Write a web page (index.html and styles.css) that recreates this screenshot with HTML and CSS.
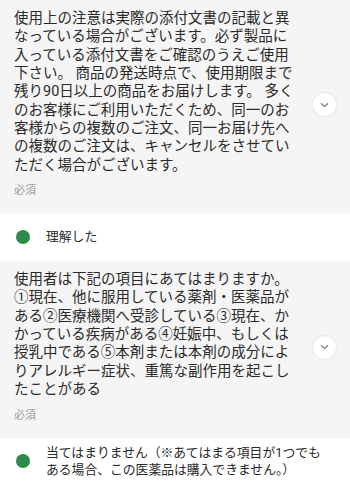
FILE: index.html
```html
<!DOCTYPE html>
<html lang="ja">
<head>
<meta charset="utf-8">
<link rel="stylesheet" href="styles.css">
</head>
<body>
<div class="form">
  <div class="question">
    <div class="q-body">
      <p class="q-text">使用上の注意は実際の添付文書の記載と異<br>なっている場合がございます。必ず製品に<br>入っている添付文書をご確認のうえご使用<br>下さい。 商品の発送時点で、使用期限まで<br>残り90日以上の商品をお届けします。 多く<br>のお客様にご利用いただくため、同一のお<br>客様からの複数のご注文、同一お届け先へ<br>の複数のご注文は、キャンセルをさせてい<br>ただく場合がございます。</p>
      <p class="req">必須</p>
    </div>
    <span class="chev"><svg width="9" height="6" viewBox="0 0 9 6"><path d="M1 1.2 L4.5 4.6 L8 1.2" fill="none" stroke="#8a8a8a" stroke-width="1.4"/></svg></span>
  </div>
  <div class="answer answer-1">
    <span class="dot"></span>
    <span class="a-text">理解した</span>
  </div>
  <div class="question">
    <div class="q-body">
      <p class="q-text">使用者は下記の項目にあてはまりますか。<br>①現在、他に服用している薬剤・医薬品が<br>ある②医療機関へ受診している③現在、か<br>かっている疾病がある④妊娠中、もしくは<br>授乳中である⑤本剤または本剤の成分によ<br>りアレルギー症状、重篤な副作用を起こし<br>たことがある</p>
      <p class="req">必須</p>
    </div>
    <span class="chev"><svg width="9" height="6" viewBox="0 0 9 6"><path d="M1 1.2 L4.5 4.6 L8 1.2" fill="none" stroke="#8a8a8a" stroke-width="1.4"/></svg></span>
  </div>
  <div class="answer answer-2">
    <span class="dot"></span>
    <span class="a-text">当てはまりません（※あてはまる項目が1つでも<br>ある場合、この医薬品は購入できません。）</span>
  </div>
</div>
</body>
</html>
```

FILE: styles.css
```css
* { box-sizing: border-box; }
html, body {
  margin: 0;
  padding: 0;
  background: #ffffff;
}
body {
  font-family: Roboto, "Noto Sans CJK JP", sans-serif;
  color: #2a2a2a;
  width: 350px;
  overflow: hidden;
}
.form {
  display: flex;
  flex-direction: column;
}
.question {
  display: flex;
  align-items: center;
  background: #f5f5f5;
  padding: 10px 13px 14px 14px;
}
.q-body {
  flex: 1;
  min-width: 0;
}
.q-text {
  margin: 0;
  font-size: 14.5px;
  line-height: 18.35px;
  white-space: nowrap;
}
.req {
  margin: 8px 0 0;
  font-size: 11px;
  line-height: 16px;
  color: #9a9a9a;
}
.chev {
  flex: none;
  width: 25px;
  height: 25px;
  border-radius: 50%;
  background: #ffffff;
  border: 1px solid #ebebeb;
  box-shadow: 0 0 2px rgba(0, 0, 0, 0.05);
  display: flex;
  align-items: center;
  justify-content: center;
}
.answer {
  display: flex;
  align-items: center;
  gap: 16px;
  padding: 0 14px 0 16px;
  font-size: 12.8px;
  line-height: 17.5px;
}
.answer-1 {
  height: 48px;
}
.answer-2 {
  padding-top: 6px;
  padding-bottom: 20px;
  border-bottom: 1px solid #ececec;
}
.dot {
  flex: none;
  width: 14px;
  height: 14px;
  border-radius: 50%;
  background: #2e8a4f;
}
.a-text {
  white-space: nowrap;
}
```
